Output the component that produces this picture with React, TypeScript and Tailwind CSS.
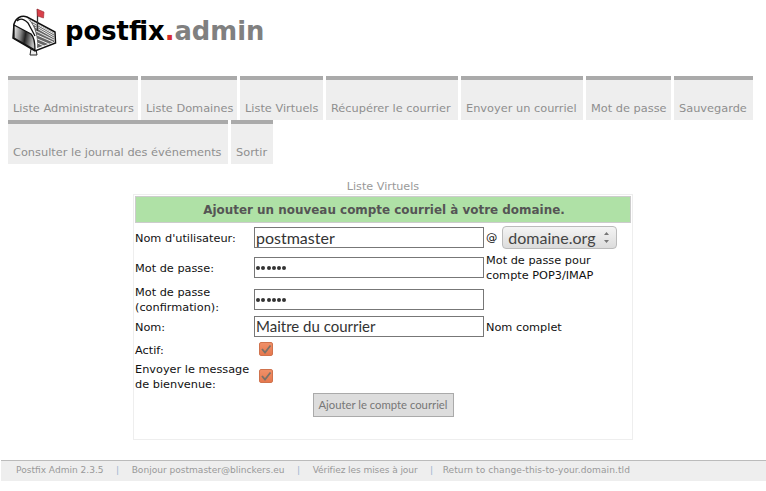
const navRows = [
  [
    { t: "Liste Administrateurs", w: "w-[130px]" },
    { t: "Liste Domaines", w: "w-[96px]" },
    { t: "Liste Virtuels", w: "w-[83px]" },
    { t: "Récupérer le courrier", w: "w-[132px]" },
    { t: "Envoyer un courriel", w: "w-[122px]" },
    { t: "Mot de passe", w: "w-[85px]" },
    { t: "Sauvegarde", w: "w-[79px]" },
  ],
  [
    { t: "Consulter le journal des événements", w: "w-[220px]" },
    { t: "Sortir", w: "w-[42px]" },
  ],
];

function Mailbox() {
  return (
    <svg width="48" height="50" viewBox="0 0 48 50" className="shrink-0">
      <defs>
        <linearGradient id="door" x1="0" y1="0" x2="1" y2="0.2">
          <stop offset="0" stopColor="#f2f2f2" />
          <stop offset="0.35" stopColor="#8c8c8c" />
          <stop offset="0.6" stopColor="#222" />
          <stop offset="1" stopColor="#bbb" />
        </linearGradient>
      </defs>
      <path d="M22 43 h5 l1 6 h-7 z" fill="#eee" stroke="#222" strokeWidth="1" />
      <path d="M5 18 C7 12 12 9 18 11 L46 26 L46.5 37 L26 45 L4 32 Z" fill="#fff" stroke="#111" strokeWidth="1.5" />
      <path d="M19 13 L45 27 L45 36 L28 42 C29 32 26 20 19 13 Z" fill="#666" />
      <path d="M22 15 L45 28 M24 18 L45 30 M26 21 L45 32 M27 25 L45 34 M28 29 L44 36 M28.5 33 L40 38 M28.5 37 L35 40" stroke="#eee" strokeWidth="1" fill="none" />
      <path d="M5 19 L22 28 C25 31 26 36 26 44 L5 32 Z" fill="url(#door)" stroke="#111" strokeWidth="1.3" />
      <path d="M8 15 C11 12 15 13 19 17 L26 30" stroke="#111" strokeWidth="1.3" fill="none" />
      <path d="M28.5 25 V3" stroke="#333" strokeWidth="1.3" />
      <path d="M28 3 L35 6 L34.5 12 L28.5 10 Z" fill="#d8404a" stroke="#9a2a32" strokeWidth="0.6" />
    </svg>
  );
}

function Check() {
  return (
    <span className="flex h-[14px] w-[14px] items-center justify-center rounded-[2px] border border-[#d0734d] bg-gradient-to-b from-[#f09068] to-[#e6784e]">
      <svg width="12" height="12" viewBox="0 0 12 12">
        <path d="M2 6 L5 9.5 L10.5 2.5" fill="none" stroke="#7a7268" strokeWidth="1.8" />
      </svg>
    </span>
  );
}

const ui = "font-['Lato','Open_Sans',sans-serif]";

function Dots() {
  return (
    <div className="flex h-[21px] w-[230px] items-center gap-[1px] border border-[#777] pl-[1px]">
      {[0, 1, 2, 3, 4, 5].map((i) => (
        <span key={i} className="ml-[0.2px] h-[4px] w-[4px] rounded-full bg-[#333]" />
      ))}
    </div>
  );
}

export default function App() {
  return (
    <div className="min-h-[491px] bg-white font-['DejaVu_Sans',sans-serif] text-[11.3px] text-[#222]">
      <div className="flex h-[76px] items-start pl-[9px] pt-[6px]">
        <Mailbox />
        <div className="ml-[8px] mt-[5px] text-[25.8px] font-bold leading-[40px] text-black">
          postfix<span className="text-[#d82c2c]">.</span>
          <span className="text-[#808080]">admin</span>
        </div>
      </div>

      <nav className="pl-[8px]">
        {navRows.map((row) => (
          <div key={row[0].t} className="flex gap-[3px]">
            {row.map((n) => (
              <div key={n.t} className={`h-[44px] whitespace-nowrap border-t-4 border-[#aaaaaa] bg-[#eeeeee] pl-[5px] pt-[21px] text-[11.35px] leading-[14px] text-[#8f8f8f] ${n.w}`}>
                {n.t}
              </div>
            ))}
          </div>
        ))}
      </nav>

      <div className="mt-[16px] text-center text-[11.2px] leading-[14px] text-[#999999]">Liste Virtuels</div>

      <div className="mx-auto h-[246px] w-[500px] border border-[#eeeeee] pl-[1px] pr-[1px] pt-[1px]">
        <div className="h-[27px] border border-[#cccccc] bg-[#afe1a6] pl-[2px] text-center text-[11.95px] font-bold leading-[27px] text-[#555555]">
          Ajouter un nouveau compte courriel à votre domaine.
        </div>

        <div className="grid grid-cols-[119px_232px_1fr] items-center pt-[2px] leading-[15px] text-[#111]">
          <div className="flex h-[25px] items-center pt-[1px]">Nom d'utilisateur:</div>
          <div className={`h-[21px] w-[230px] border border-[#777] pl-[1px] text-[16px] leading-[19px] text-[#333] ${ui}`}>postmaster</div>
          <div className="flex items-center gap-[5px]">
            <span>@</span>
            <div className={`flex h-[23px] w-[115px] items-center justify-between rounded-[4px] border border-[#bbb] bg-gradient-to-b from-[#f4f4f4] to-[#dcdcdc] pl-[5px] pr-[6px] text-[16px] text-[#444] ${ui}`}>
              domaine.org
              <svg width="7" height="13" viewBox="0 0 7 13">
                <path d="M3.5 1 L6 4 H1 Z M3.5 12 L6 9 H1 Z" fill="#777" />
              </svg>
            </div>
          </div>

          <div className="flex h-[35px] items-center pt-[1px]">Mot de passe:</div>
          <Dots />
          <div className="self-start pt-[3px]">Mot de passe pour<br />compte POP3/IMAP</div>

          <div className="flex h-[29px] items-center">Mot de passe (confirmation):</div>
          <Dots />
          <div />

          <div className="flex h-[25px] items-center pt-[1px]">Nom:</div>
          <div className={`h-[21px] w-[230px] border border-[#777] pl-[1px] text-[15px] leading-[18px] text-[#333] ${ui}`}>Maitre du courrier</div>
          <div className="pt-[1px]">Nom complet</div>

          <div className="flex h-[20px] items-center pt-[2px]">Actif:</div>
          <div className="pl-[5px]"><Check /></div>
          <div />

          <div className="flex h-[34px] items-center pt-[1px]">Envoyer le message de bienvenue:</div>
          <div className="pl-[5px]"><Check /></div>
          <div />
        </div>

        <div className="flex justify-center">
          <div className={`flex h-[24px] w-[141px] items-center justify-center whitespace-nowrap border border-[#aaa] bg-[#dddddd] text-[11.3px] text-[#777] ${ui}`}>
            Ajouter le compte courriel
          </div>
        </div>
      </div>

      <div className="ml-[1px] mt-[20px] flex h-[21px] items-center gap-[12.5px] border-t border-[#bbbbbb] bg-[#eeeeee] pl-[15px] text-[9.05px] text-[#999999]">
        <span>Postfix Admin 2.3.5</span>
        <span className="text-[#9db4d0]">|</span>
        <span>Bonjour postmaster@blinckers.eu</span>
        <span className="text-[#9db4d0]">|</span>
        <span className="tracking-[-0.08px]">Vérifiez les mises à jour</span>
        <span className="text-[#9db4d0]">|</span>
        <span className="-ml-[3px] tracking-[0.07px]">Return to change-this-to-your.domain.tld</span>
      </div>
    </div>
  );
}
